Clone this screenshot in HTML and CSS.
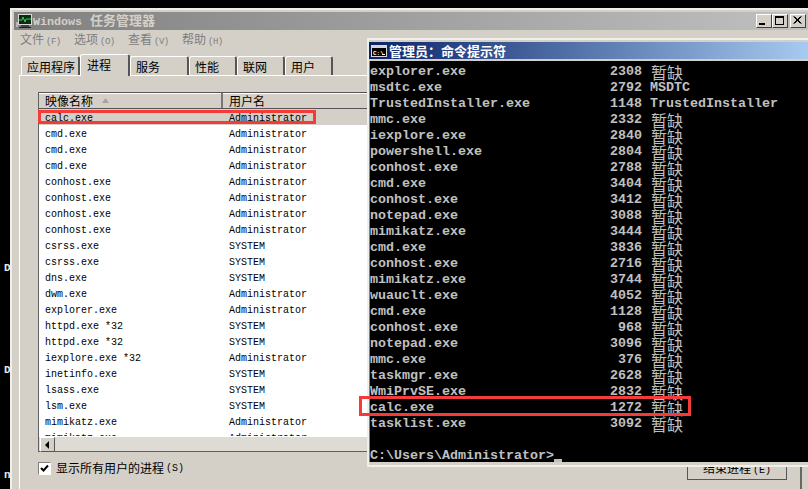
FILE: index.html
```html
<!DOCTYPE html>
<html lang="zh-CN">
<head>
<meta charset="utf-8">
<title>Windows 任务管理器</title>
<link rel="stylesheet" href="styles.css">
</head>
<body>
<div class="desktop">
  <span class="desk-text desk-d1">D</span>
  <span class="desk-text desk-d2">D</span>
  <span class="desk-text desk-n">n</span>

  <section class="taskmgr">
    <header class="tm-title">
      <svg class="tm-icon" width="16" height="16" viewBox="0 0 16 16">
        <rect x="0" y="9" width="2" height="5" fill="#b8b8b8"/>
        <rect x="2" y="1" width="14" height="11" fill="#d8d8d8"/>
        <rect x="3" y="2" width="12" height="9" fill="#0c2a18"/>
        <path d="M3 7h3l1-3 2 5 1-3h5" fill="none" stroke="#37d447" stroke-width="1"/>
        <rect x="5" y="12" width="8" height="2" fill="#404040"/>
        <rect x="3" y="14" width="12" height="1" fill="#202020"/>
      </svg>
      <span class="tm-name"><span class="tm-latin">Windows</span>任务管理器</span>
      <div class="winbtns">
        <span class="winbtn"><svg width="15" height="13" viewBox="0 0 15 13"><rect x="3" y="9" width="6" height="2" fill="#000"/></svg></span>
        <span class="winbtn"><svg width="15" height="13" viewBox="0 0 15 13"><path d="M3 2.500h9M3 3.500h9M3.500 3v7.500h8V3M3 10.500h9" fill="none" stroke="#000"/></svg></span>
        <span class="winbtn winbtn-close"><svg width="15" height="13" viewBox="0 0 15 13"><path d="M3.500 2.500l7 7M4.500 2.500l7 7M10.500 2.500l-7 7M11.500 2.500l-7 7" fill="none" stroke="#000"/></svg></span>
      </div>
    </header>

    <nav class="menu">
      <span class="menu-item">文件<i>(F)</i></span>
      <span class="menu-item">选项<i>(O)</i></span>
      <span class="menu-item">查看<i>(V)</i></span>
      <span class="menu-item">帮助<i>(H)</i></span>
    </nav>

    <div class="tabs">
      <span class="tab tab-w58">应用程序</span>
      <span class="tab tab-active">进程</span>
      <span class="tab tab-w58">服务</span>
      <span class="tab tab-w47">性能</span>
      <span class="tab tab-w47">联网</span>
      <span class="tab tab-w47">用户</span>
    </div>

    <div class="panel">
      <div class="list">
        <div class="list-head">
          <span class="col-name head-cell">映像名称<svg class="sort" width="7" height="5" viewBox="0 0 7 5"><path d="M3.500 0L7 5H0z" fill="#a8a49c"/></svg></span>
          <span class="col-user head-cell">用户名</span>
        </div>
        <div class="list-body">
          <div class="lrow lrow-sel"><span class="col-name">calc.exe</span><span class="col-user">Administrator</span></div>
          <div class="lrow"><span class="col-name">cmd.exe</span><span class="col-user">Administrator</span></div>
          <div class="lrow"><span class="col-name">cmd.exe</span><span class="col-user">Administrator</span></div>
          <div class="lrow"><span class="col-name">cmd.exe</span><span class="col-user">Administrator</span></div>
          <div class="lrow"><span class="col-name">conhost.exe</span><span class="col-user">Administrator</span></div>
          <div class="lrow"><span class="col-name">conhost.exe</span><span class="col-user">Administrator</span></div>
          <div class="lrow"><span class="col-name">conhost.exe</span><span class="col-user">Administrator</span></div>
          <div class="lrow"><span class="col-name">conhost.exe</span><span class="col-user">Administrator</span></div>
          <div class="lrow"><span class="col-name">csrss.exe</span><span class="col-user">SYSTEM</span></div>
          <div class="lrow"><span class="col-name">csrss.exe</span><span class="col-user">SYSTEM</span></div>
          <div class="lrow"><span class="col-name">dns.exe</span><span class="col-user">SYSTEM</span></div>
          <div class="lrow"><span class="col-name">dwm.exe</span><span class="col-user">Administrator</span></div>
          <div class="lrow"><span class="col-name">explorer.exe</span><span class="col-user">Administrator</span></div>
          <div class="lrow"><span class="col-name">httpd.exe *32</span><span class="col-user">SYSTEM</span></div>
          <div class="lrow"><span class="col-name">httpd.exe *32</span><span class="col-user">SYSTEM</span></div>
          <div class="lrow"><span class="col-name">iexplore.exe *32</span><span class="col-user">Administrator</span></div>
          <div class="lrow"><span class="col-name">inetinfo.exe</span><span class="col-user">SYSTEM</span></div>
          <div class="lrow"><span class="col-name">lsass.exe</span><span class="col-user">SYSTEM</span></div>
          <div class="lrow"><span class="col-name">lsm.exe</span><span class="col-user">SYSTEM</span></div>
          <div class="lrow"><span class="col-name">mimikatz.exe</span><span class="col-user">Administrator</span></div>
          <div class="lrow"><span class="col-name">mimikatz.exe</span><span class="col-user">Administrator</span></div>
        </div>
        <div class="hscroll">
          <span class="scroll-btn"><svg width="5" height="8" viewBox="0 0 5 8"><path d="M4 0v8L0 4z" fill="#000"/></svg></span>
        </div>
      </div>
      <div class="footer">
        <label class="showall">
          <span class="check"><svg width="9" height="9" viewBox="0 0 9 9"><path d="M1 4l2.500 2.500L8 1.500" fill="none" stroke="#000" stroke-width="2"/></svg></span>
          显示所有用户的进程<i>(S)</i>
        </label>
        <span class="endbtn">结束进程<i>(E)</i></span>
      </div>
    </div>
  </section>

  <section class="console">
    <header class="con-title">
      <svg class="con-icon" width="16" height="12" viewBox="0 0 16 12">
        <rect x="0" y="0" width="16" height="12" fill="#d8d8d8"/>
        <rect x="1" y="3" width="14" height="8" fill="#000"/>
        <text x="2" y="9.500" class="con-icon-text">C:\</text>
        <rect x="11" y="9" width="3" height="1" fill="#fff"/>
      </svg>
      <span class="con-name">管理员：命令提示符</span>
    </header>
    <div class="con-body">
      <div class="crow"><span class="c-name">explorer.exe</span><span class="c-pid">2308</span><span class="c-user c-cjk">暂缺</span></div>
      <div class="crow"><span class="c-name">msdtc.exe</span><span class="c-pid">2792</span><span class="c-user">MSDTC</span></div>
      <div class="crow"><span class="c-name">TrustedInstaller.exe</span><span class="c-pid">1148</span><span class="c-user">TrustedInstaller</span></div>
      <div class="crow"><span class="c-name">mmc.exe</span><span class="c-pid">2332</span><span class="c-user c-cjk">暂缺</span></div>
      <div class="crow"><span class="c-name">iexplore.exe</span><span class="c-pid">2840</span><span class="c-user c-cjk">暂缺</span></div>
      <div class="crow"><span class="c-name">powershell.exe</span><span class="c-pid">2804</span><span class="c-user c-cjk">暂缺</span></div>
      <div class="crow"><span class="c-name">conhost.exe</span><span class="c-pid">2788</span><span class="c-user c-cjk">暂缺</span></div>
      <div class="crow"><span class="c-name">cmd.exe</span><span class="c-pid">3404</span><span class="c-user c-cjk">暂缺</span></div>
      <div class="crow"><span class="c-name">conhost.exe</span><span class="c-pid">3412</span><span class="c-user c-cjk">暂缺</span></div>
      <div class="crow"><span class="c-name">notepad.exe</span><span class="c-pid">3088</span><span class="c-user c-cjk">暂缺</span></div>
      <div class="crow"><span class="c-name">mimikatz.exe</span><span class="c-pid">3444</span><span class="c-user c-cjk">暂缺</span></div>
      <div class="crow"><span class="c-name">cmd.exe</span><span class="c-pid">3836</span><span class="c-user c-cjk">暂缺</span></div>
      <div class="crow"><span class="c-name">conhost.exe</span><span class="c-pid">2716</span><span class="c-user c-cjk">暂缺</span></div>
      <div class="crow"><span class="c-name">mimikatz.exe</span><span class="c-pid">3744</span><span class="c-user c-cjk">暂缺</span></div>
      <div class="crow"><span class="c-name">wuauclt.exe</span><span class="c-pid">4052</span><span class="c-user c-cjk">暂缺</span></div>
      <div class="crow"><span class="c-name">cmd.exe</span><span class="c-pid">1128</span><span class="c-user c-cjk">暂缺</span></div>
      <div class="crow"><span class="c-name">conhost.exe</span><span class="c-pid">968</span><span class="c-user c-cjk">暂缺</span></div>
      <div class="crow"><span class="c-name">notepad.exe</span><span class="c-pid">3096</span><span class="c-user c-cjk">暂缺</span></div>
      <div class="crow"><span class="c-name">mmc.exe</span><span class="c-pid">376</span><span class="c-user c-cjk">暂缺</span></div>
      <div class="crow"><span class="c-name">taskmgr.exe</span><span class="c-pid">2628</span><span class="c-user c-cjk">暂缺</span></div>
      <div class="crow"><span class="c-name">WmiPrvSE.exe</span><span class="c-pid">2832</span><span class="c-user c-cjk">暂缺</span></div>
      <div class="crow"><span class="c-name">calc.exe</span><span class="c-pid">1272</span><span class="c-user c-cjk">暂缺</span></div>
      <div class="crow"><span class="c-name">tasklist.exe</span><span class="c-pid">3092</span><span class="c-user c-cjk">暂缺</span></div>
      <div class="crow"></div>
      <div class="crow">C:\Users\Administrator&gt;<span class="cursor"></span></div>
    </div>
  </section>

  <div class="mark mark-list"></div>
  <div class="mark mark-console"></div>
</div>
</body>
</html>
```
FILE: styles.css
```css
* { box-sizing: border-box; }
html, body { margin: 0; padding: 0; }
body { width: 808px; height: 489px; overflow: hidden; background: #000; }
i { font-style: normal; }

.desktop {
  position: relative;
  width: 808px;
  height: 489px;
  overflow: hidden;
  background: #000;
  font-family: "Noto Sans CJK SC", sans-serif;
  font-size: 12px;
}
.desk-text {
  position: absolute;
  left: 4px;
  color: #e8e8e8;
  font: bold 11px/12px "Liberation Mono", monospace;
}
.desk-d1 { top: 262px; }
.desk-d2 { top: 364px; }
.desk-n { top: 469px; }

/* Task manager window */
.taskmgr {
  position: absolute;
  left: 10px;
  top: 8px;
  width: 815px;
  height: 500px;
  display: flex;
  flex-direction: column;
  padding: 2px;
  background: #d4d0c8;
  border: 2px solid #f0eee8;
  border-right: 0;
}
.tm-title {
  display: flex;
  align-items: center;
  flex: none;
  width: 794px;
  height: 18px;
  padding-left: 2px;
  background: linear-gradient(to right, #808080, #c0c0c0);
}
.tm-icon { flex: none; margin-right: 1px; }
.tm-name {
  color: #d4d0c8;
  font: bold 13px/18px "Noto Sans CJK SC", sans-serif;
  white-space: pre;
}
.tm-latin { margin-right: 8px; font: bold 11.7px/18px "Liberation Mono", monospace; }
.winbtns { display: flex; margin-left: auto; margin-right: 2px; }
.winbtn {
  display: block;
  width: 16px;
  height: 14px;
  background: #d4d0c8;
  border-top: 1px solid #fff;
  border-left: 1px solid #fff;
  border-right: 1px solid #404040;
  border-bottom: 1px solid #404040;
  overflow: hidden;
}
.winbtn svg { display: block; margin: -1px 0 0 -1px; }
.winbtn-close { margin-left: 2px; }

.menu {
  display: flex;
  flex: none;
  gap: 14px;
  height: 20px;
  padding: 0 0 0 6px;
  color: #7e7e7e;
  line-height: 18px;
}
.menu-item { display: block; width: 40px; white-space: nowrap; }
.menu-item i { margin-left: 2px; font: 9px "Liberation Mono", monospace; letter-spacing: -0.5px; }

.tabs {
  display: flex;
  flex: none;
  align-items: flex-end;
  height: 25px;
  padding-left: 7px;
  position: relative;
  z-index: 1;
}
.tab {
  display: block;
  height: 19px;
  padding-left: 5px;
  background: #d4d0c8;
  border-top: 1px solid #fff;
  border-left: 1px solid #fff;
  border-right: 2px solid #555;
  border-radius: 3px 3px 0 0;
  color: #000;
  line-height: 20px;
  white-space: nowrap;
}
.tab-w58 { width: 59px; }
.tab-w47 { width: 48px; }
.tab-active {
  width: 50px;
  height: 22px;
  margin-bottom: -1px;
  padding-left: 6px;
  line-height: 19px;
}

.panel {
  flex: none;
  width: 783px;
  height: 420px;
  margin-left: 5px;
  padding: 16px 14px 0 18px;
  background: #d4d0c8;
  border-top: 1px solid #fff;
  border-left: 1px solid #fff;
  border-right: 2px solid #666;
}

.list {
  width: 749px;
  height: 360px;
  display: flex;
  flex-direction: column;
  background: #fff;
  border-left: 1px solid #606060;
  border-bottom: 1px solid #606060;
}
.list-head {
  display: flex;
  flex: none;
  height: 17px;
  background: #d4d0c8;
  border-top: 1px solid #555;
  border-bottom: 1px solid #555;
  box-shadow: inset 0 1px 0 #fff;
}
.head-cell { color: #000; line-height: 15px; }
.col-name { flex: none; width: 184px; padding-left: 6px; white-space: pre; }
.col-user { flex: none; padding-left: 6px; white-space: pre; }
.head-cell.col-name { display: flex; align-items: center; border-right: 2px solid #777; }
.sort { margin-left: 9px; }
.list-body { flex: 1; min-height: 0; overflow: hidden; }
.lrow {
  display: flex;
  height: 16px;
  padding-top: 2px;
  color: #000;
  font: 10px/16px "Liberation Mono", monospace;
}
.lrow-sel { background: #d4d0c8; }
.hscroll {
  flex: none;
  height: 15px;
  background: #dedbd4;
  border-top: 1px solid #fff;
}
.scroll-btn {
  display: flex;
  align-items: center;
  justify-content: center;
  width: 15px;
  height: 15px;
  margin-left: 1px;
  background: #d4d0c8;
  border-top: 1px solid #fff;
  border-left: 1px solid #fff;
  border-right: 1px solid #555;
  border-bottom: 1px solid #555;
}

.footer {
  display: flex;
  justify-content: space-between;
  width: 749px;
  margin-top: 6px;
}
.showall {
  display: flex;
  align-items: center;
  gap: 5px;
  height: 18px;
  margin-top: 1px;
  color: #000;
  line-height: 18px;
  white-space: nowrap;
}
.showall i { margin-left: -3px; font: 10px "Liberation Mono", monospace; }
.check {
  display: flex;
  align-items: center;
  justify-content: center;
  width: 13px;
  height: 13px;
  background: #fff;
  border: 1px solid #fff;
  border-top-color: #808080;
  border-left-color: #808080;
}
.endbtn {
  display: block;
  width: 100px;
  height: 22px;
  background: #d4d0c8;
  border: 1px solid #555;
  border-top: 0;
  text-align: center;
  line-height: 20px;
  white-space: nowrap;
}
.endbtn i { margin-left: 2px; font: 10px "Liberation Mono", monospace; }

/* Console window */
.console {
  position: absolute;
  left: 367px;
  top: 38px;
  width: 450px;
  height: 429px;
  display: flex;
  flex-direction: column;
  padding: 2px 0 3px;
  background: #d4d0c8;
  border: 2px solid #f0eee8;
  border-right: 0;
  z-index: 2;
}
.con-title {
  display: flex;
  align-items: center;
  flex: none;
  height: 17px;
  padding-left: 2px;
  background: linear-gradient(to right, #0a246a, #a6caf0);
  width: 439px;
  color: #fff;
}
.con-icon { flex: none; margin-right: 2px; }
.con-icon-text { fill: #fff; font: bold 6px "Liberation Mono", monospace; }
.con-name { font: bold 13px/17px "Noto Sans CJK SC", sans-serif; white-space: pre; }
.con-body {
  flex: 1;
  min-height: 0;
  margin-top: 2px;
  padding-top: 3px;
  background: #000;
  border-left: 1px solid #808080;
  color: #c0c0c0;
  font: bold 13.33px/16px "Liberation Mono", monospace;
  overflow: hidden;
}
.crow { display: flex; height: 16px; white-space: pre; }
.c-name { flex: none; width: 208px; }
.c-pid { flex: none; width: 64px; text-align: right; }
.c-user { flex: none; margin-left: 8px; }
.c-cjk {
  margin-left: 9px;
  font: 400 16px/16px "Noto Sans CJK SC", sans-serif;
}
.cursor {
  display: block;
  width: 8px;
  height: 3px;
  margin-top: 11px;
  background: #c0c0c0;
}

/* Red annotation rectangles */
.mark { position: absolute; border: 3px solid #f53a3a; z-index: 3; }
.mark-list { left: 38px; top: 110px; width: 278px; height: 14px; }
.mark-console { left: 359px; top: 396px; width: 332px; height: 20px; }
```
